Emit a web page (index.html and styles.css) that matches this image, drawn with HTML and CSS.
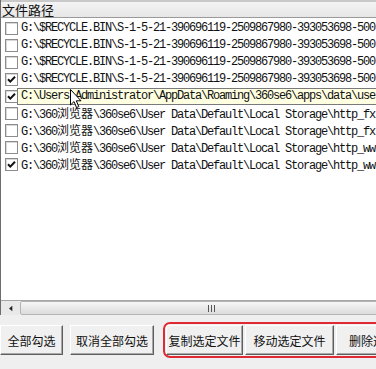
FILE: index.html
```html
<!DOCTYPE html>
<html>
<head>
<meta charset="utf-8">
<link rel="stylesheet" href="styles.css">
</head>
<body>
<div class="app">
  <div class="list">
    <div class="header">文件路径</div>
    <div class="rows">
      <div class="row"><span class="cb"></span><span class="path">G:\$RECYCLE.BIN\S-1-5-21-390696119-2509867980-393053698-500</span></div>
      <div class="row"><span class="cb"></span><span class="path">G:\$RECYCLE.BIN\S-1-5-21-390696119-2509867980-393053698-500</span></div>
      <div class="row"><span class="cb"></span><span class="path">G:\$RECYCLE.BIN\S-1-5-21-390696119-2509867980-393053698-500</span></div>
      <div class="row"><span class="cb checked"><svg viewBox="0 0 13 13" width="13" height="13"><path d="M3 6.2 L5.3 8.6 L10 3.8" fill="none" stroke="#111" stroke-width="2"/></svg></span><span class="path">G:\$RECYCLE.BIN\S-1-5-21-390696119-2509867980-393053698-500</span></div>
      <div class="row tip"><span class="cb checked"><svg viewBox="0 0 13 13" width="13" height="13"><path d="M3 6.2 L5.3 8.6 L10 3.8" fill="none" stroke="#111" stroke-width="2"/></svg></span><span class="path">C:\Users\Administrator\AppData\Roaming\360se6\apps\data\user</span></div>
      <div class="row"><span class="cb"></span><span class="path">G:\360<span class="cjk">浏览器</span>\360se6\User Data\Default\Local Storage\http_fx</span></div>
      <div class="row"><span class="cb"></span><span class="path">G:\360<span class="cjk">浏览器</span>\360se6\User Data\Default\Local Storage\http_fx</span></div>
      <div class="row"><span class="cb"></span><span class="path">G:\360<span class="cjk">浏览器</span>\360se6\User Data\Default\Local Storage\http_ww</span></div>
      <div class="row"><span class="cb checked"><svg viewBox="0 0 13 13" width="13" height="13"><path d="M3 6.2 L5.3 8.6 L10 3.8" fill="none" stroke="#111" stroke-width="2"/></svg></span><span class="path">G:\360<span class="cjk">浏览器</span>\360se6\User Data\Default\Local Storage\http_ww</span></div>
    </div>
    <div class="hscroll">
      <div class="arrow-btn"><svg viewBox="0 0 6 8" width="4" height="7"><path d="M5 0 L0 4 L5 8 Z" fill="#222"/></svg></div>
      <div class="thumb"><span class="grip"></span></div>
    </div>
  </div>
  <div class="buttons">
    <button class="btn w1">全部勾选</button>
    <button class="btn w2">取消全部勾选</button>
    <button class="btn w3">复制选定文件</button>
    <button class="btn w4">移动选定文件</button>
    <button class="btn w5">删除选定</button>
  </div>
  <div class="annot"></div>
  <svg class="pointer" viewBox="0 0 12 20" width="12" height="20"><path d="M0.5 0.5 L0.5 16 L4 12.6 L6.6 18.6 L8.8 17.6 L6.3 11.8 L11 11.8 Z" fill="#fff" stroke="#000" stroke-width="1" stroke-linejoin="miter"/></svg>
</div>
</body>
</html>
```

FILE: styles.css
```css
* { box-sizing: border-box; }
html, body { margin: 0; padding: 0; }
body {
  width: 376px;
  height: 369px;
  overflow: hidden;
  background: #efefef;
  font-family: "Noto Sans CJK SC", sans-serif;
}
.app {
  position: relative;
  width: 376px;
  height: 369px;
  overflow: hidden;
  display: flex;
  flex-direction: column;
}
.list {
  height: 315px;
  display: flex;
  flex-direction: column;
  background: #fff;
  border-left: 1px solid #6d6d6d;
}
.header {
  height: 18px;
  flex: none;
  background: linear-gradient(#f4f4f4, #e6e6e6);
  border-top: 2px solid #c9c9c9;
  border-bottom: 1px solid #9a9a9a;
  font-size: 13px;
  line-height: 15px;
  padding-left: 1px;
  color: #111;
}
.rows {
  flex: 1;
  padding-top: 2px;
  overflow: hidden;
}
.row {
  height: 17px;
  display: flex;
  align-items: center;
  padding-left: 4px;
  white-space: nowrap;
}
.cb {
  flex: none;
  width: 13px;
  height: 13px;
  border: 1px solid #8c8c8c;
  box-shadow: inset 1px 1px 0 #d8d8d8;
  background: #fff;
  margin-right: 3px;
  display: flex;
}
.cb svg { display: block; margin: -1px; }
.path {
  font-family: "Liberation Mono", "Noto Sans CJK SC", monospace;
  font-size: 12px;
  letter-spacing: -1.2px;
  color: #111;
  line-height: 15px;
}
.cjk {
  font-family: "Noto Sans CJK SC", sans-serif;
  letter-spacing: 0;
  font-size: 12px;
}
.row.tip .path {
  flex: 1;
  margin-left: -4px;
  padding-left: 3px;
  background: #ffffe1;
  border: 1px solid #7a7a7a;
  border-right: none;
  overflow: hidden;
}
.hscroll {
  flex: none;
  height: 15px;
  display: flex;
  background: #f2f2f2;
  border-top: 1px solid #a6a6a6;
}
.arrow-btn {
  width: 19px;
  display: flex;
  align-items: center;
  justify-content: center;
  background: #e9e9e9;
}
.thumb {
  flex: 1;
  margin-right: -40px;
  border: 1px solid #b4b4b4;
  border-radius: 2px;
  background: linear-gradient(#f6f6f6, #dcdcdc);
  display: flex;
  align-items: center;
  padding-left: 187px;
}
.grip {
  width: 7px;
  height: 7px;
  background: repeating-linear-gradient(90deg, #555 0 1px, transparent 1px 3px);
}
.buttons {
  flex: 1;
  display: flex;
  align-items: flex-start;
  padding-top: 10px;
  overflow: hidden;
}
.btn {
  height: 30px;
  font-family: "Noto Sans CJK SC", sans-serif;
  font-size: 12px;
  color: #111;
  background: #f0f0f0;
  border: 1px solid;
  border-color: #fff #5e5e5e #5e5e5e #fff;
  box-shadow: inset -1px -1px 0 #a8a8a8;
  padding: 0;
  flex: none;
  text-align: center;
  white-space: nowrap;
  overflow: hidden;
}
.w1 { width: 63px; margin-right: 7px; }
.w2 { width: 84px; margin-right: 12px; }
.w3 { width: 77px; margin-right: 2px; }
.w4 { width: 89px; margin-right: 2px; }
.w5 { width: 80px; text-align: left; padding-left: 12px; }
.annot {
  position: absolute;
  left: 163px;
  top: 322px;
  width: 240px;
  height: 36px;
  border: 2px solid #de2a34;
  border-radius: 7px;
}
.pointer {
  position: absolute;
  left: 70px;
  top: 89px;
}
```
